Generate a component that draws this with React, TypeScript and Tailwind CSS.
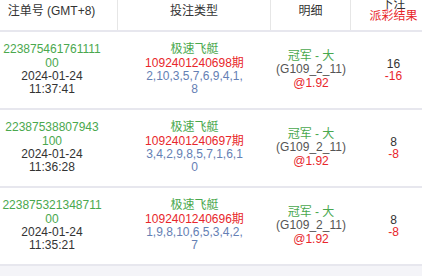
const rows = [
  {
    id: ["223875461761111", "00"],
    time: "11:37:41",
    issue: "1092401240698期",
    nums: ["2,10,3,5,7,6,9,4,1,", "8"],
    bet: "16",
    result: "-16",
  },
  {
    id: ["22387538807943", "100"],
    time: "11:36:28",
    issue: "1092401240697期",
    nums: ["3,4,2,9,8,5,7,1,6,1", "0"],
    bet: "8",
    result: "-8",
  },
  {
    id: ["223875321348711", "00"],
    time: "11:35:21",
    issue: "1092401240696期",
    nums: ["1,9,8,10,6,5,3,4,2,", "7"],
    bet: "8",
    result: "-8",
  },
];

const font = "font-['Liberation_Sans','Noto_Sans_CJK_SC',sans-serif]";

export default function App() {
  return (
    <div className={`w-[422px] h-[276px] overflow-hidden bg-[#f4f4f8] text-[12px] ${font}`}>
      <div className="w-[436px]">
        {/* Header */}
        <div className="flex h-[30px] bg-white text-[#333] border-b-2 border-[#e7e7ee] box-content">
          <div className="w-[118px] shrink-0 flex items-center justify-center pr-[14px] pb-[8px] border-r border-[#e6e6e6]">
            注单号 (GMT+8)
          </div>
          <div className="w-[153px] shrink-0 flex items-center justify-center pb-[8px] border-r border-[#e6e6e6]">
            投注类型
          </div>
          <div className="w-[80px] shrink-0 flex items-center justify-center pb-[8px] border-r border-[#e6e6e6]">
            明细
          </div>
          <div className="flex-1 flex flex-col items-center justify-center pb-[11px] leading-[12px]">
            <span>下注</span>
            <span className="text-[#e8262b]">派彩结果</span>
          </div>
        </div>

        {/* Rows */}
        {rows.map((r) => (
          <div
            key={r.issue}
            className="flex h-[76px] bg-white border-b-2 border-[#e7e7ee] box-content leading-[13.4px] text-center"
          >
            <div className="w-[118px] shrink-0 flex flex-col items-center justify-center pr-[14px]">
              <span className="text-[#4aa84e]">{r.id[0]}</span>
              <span className="text-[#4aa84e]">{r.id[1]}</span>
              <span className="text-[#333]">2024-01-24</span>
              <span className="text-[#333]">{r.time}</span>
            </div>
            <div className="w-[153px] shrink-0 flex flex-col items-center justify-center">
              <span className="text-[#4aa84e]">极速飞艇</span>
              <span className="text-[#e8262b]">{r.issue}</span>
              <span className="text-[#6580b4]">{r.nums[0]}</span>
              <span className="text-[#6580b4]">{r.nums[1]}</span>
            </div>
            <div className="w-[80px] shrink-0 flex flex-col items-center justify-center">
              <span className="text-[#4aa84e]">冠军 - 大</span>
              <span className="text-[#555]">(G109_2_11)</span>
              <span className="text-[#e8262b]">@1.92</span>
            </div>
            <div className="flex-1 flex flex-col items-center justify-center leading-[12px]">
              <span className="text-[#333]">{r.bet}</span>
              <span className="text-[#e8262b]">{r.result}</span>
            </div>
          </div>
        ))}
      </div>
    </div>
  );
}
